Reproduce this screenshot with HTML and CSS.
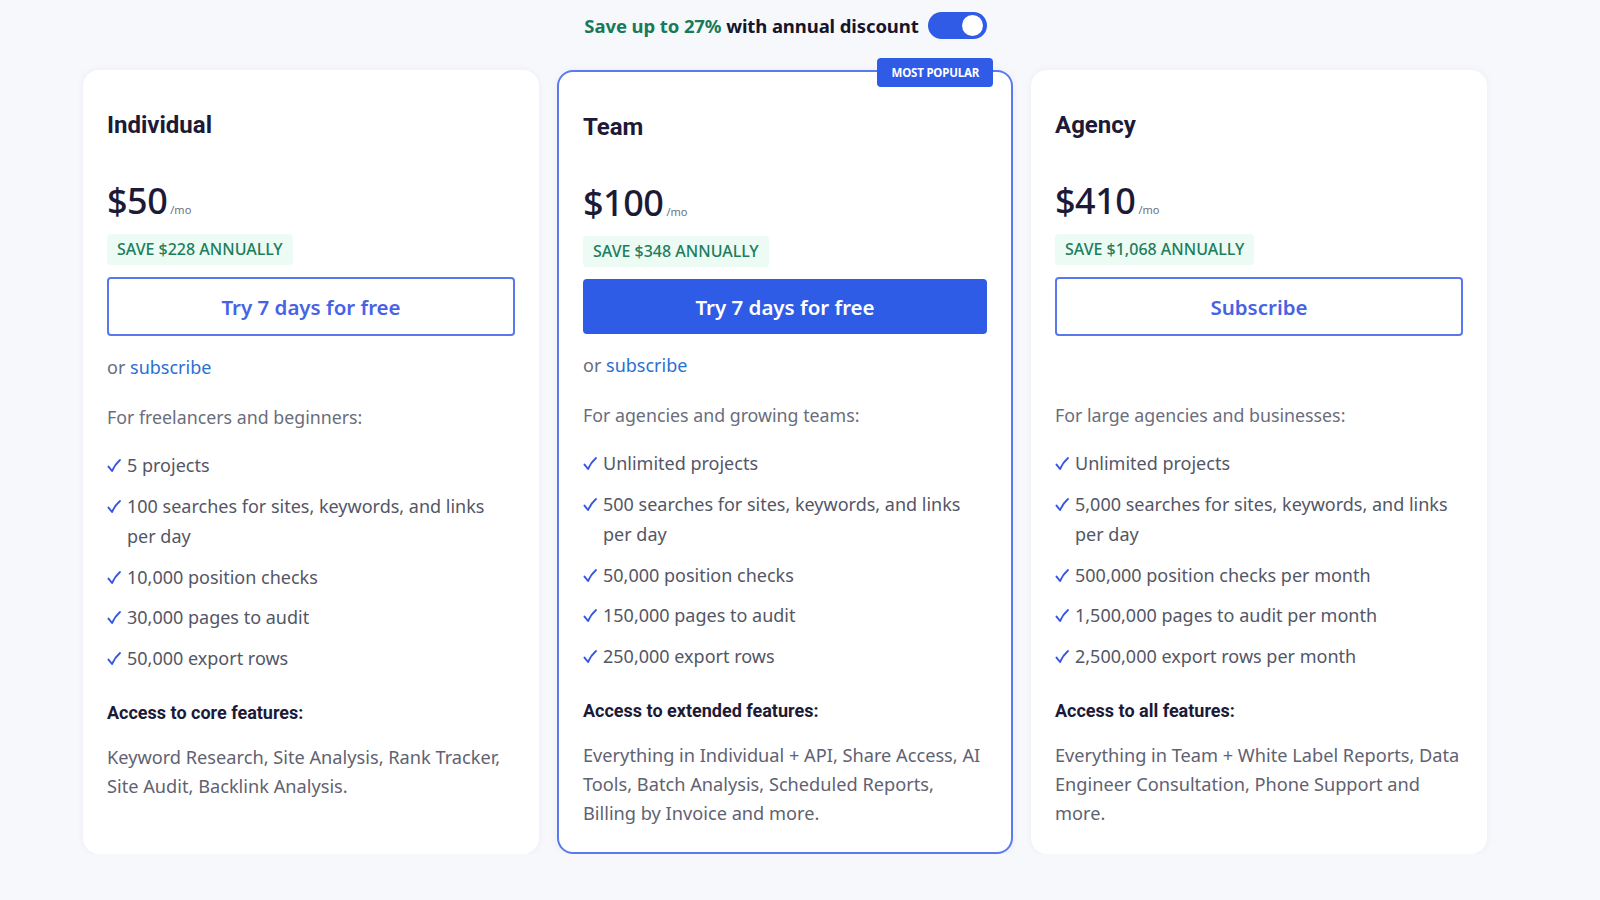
FILE: index.html
```html
<!DOCTYPE html>
<html lang="en">
<head>
<meta charset="utf-8">
<title>Pricing</title>
<link rel="stylesheet" href="styles.css">
</head>
<body>
<div class="page">
  <div class="top">
    <span class="top-text"><span class="green">Save up to 27%</span> with annual discount</span>
    <span class="toggle"><span class="knob"></span></span>
  </div>
  <div class="cards">
    <div class="card">
      <h2 class="plan">Individual</h2>
      <div class="price"><span class="amount">$50</span><span class="per">/mo</span></div>
      <div class="save">SAVE $228 ANNUALLY</div>
      <a class="btn btn-outline">Try 7 days for free</a>
      <div class="alt">or <a class="link">subscribe</a></div>
      <div class="for">For freelancers and beginners:</div>
      <ul class="list">
        <li><svg class="chk" viewBox="0 0 14 14"><path d="M1.5 7.6 L5 12 C7 7.5 9.5 4 13 1"/></svg><span>5 projects</span></li>
        <li><svg class="chk" viewBox="0 0 14 14"><path d="M1.5 7.6 L5 12 C7 7.5 9.5 4 13 1"/></svg><span>100 searches for sites, keywords, and links per day</span></li>
        <li><svg class="chk" viewBox="0 0 14 14"><path d="M1.5 7.6 L5 12 C7 7.5 9.5 4 13 1"/></svg><span>10,000 position checks</span></li>
        <li><svg class="chk" viewBox="0 0 14 14"><path d="M1.5 7.6 L5 12 C7 7.5 9.5 4 13 1"/></svg><span>30,000 pages to audit</span></li>
        <li><svg class="chk" viewBox="0 0 14 14"><path d="M1.5 7.6 L5 12 C7 7.5 9.5 4 13 1"/></svg><span>50,000 export rows</span></li>
      </ul>
      <div class="access">Access to core features:</div>
      <p class="desc">Keyword Research, Site Analysis, Rank Tracker, Site Audit, Backlink Analysis.</p>
    </div>
    <div class="card card-popular">
      <span class="popular">MOST POPULAR</span>
      <h2 class="plan">Team</h2>
      <div class="price"><span class="amount">$100</span><span class="per">/mo</span></div>
      <div class="save">SAVE $348 ANNUALLY</div>
      <a class="btn btn-filled">Try 7 days for free</a>
      <div class="alt">or <a class="link">subscribe</a></div>
      <div class="for">For agencies and growing teams:</div>
      <ul class="list">
        <li><svg class="chk" viewBox="0 0 14 14"><path d="M1.5 7.6 L5 12 C7 7.5 9.5 4 13 1"/></svg><span>Unlimited projects</span></li>
        <li><svg class="chk" viewBox="0 0 14 14"><path d="M1.5 7.6 L5 12 C7 7.5 9.5 4 13 1"/></svg><span>500 searches for sites, keywords, and links per day</span></li>
        <li><svg class="chk" viewBox="0 0 14 14"><path d="M1.5 7.6 L5 12 C7 7.5 9.5 4 13 1"/></svg><span>50,000 position checks</span></li>
        <li><svg class="chk" viewBox="0 0 14 14"><path d="M1.5 7.6 L5 12 C7 7.5 9.5 4 13 1"/></svg><span>150,000 pages to audit</span></li>
        <li><svg class="chk" viewBox="0 0 14 14"><path d="M1.5 7.6 L5 12 C7 7.5 9.5 4 13 1"/></svg><span>250,000 export rows</span></li>
      </ul>
      <div class="access">Access to extended features:</div>
      <p class="desc">Everything in Individual + API, Share Access, AI Tools, Batch Analysis, Scheduled Reports, Billing by Invoice and more.</p>
    </div>
    <div class="card">
      <h2 class="plan">Agency</h2>
      <div class="price"><span class="amount">$410</span><span class="per">/mo</span></div>
      <div class="save">SAVE $1,068 ANNUALLY</div>
      <a class="btn btn-outline">Subscribe</a>
      <div class="alt alt-empty"></div>
      <div class="for">For large agencies and businesses:</div>
      <ul class="list">
        <li><svg class="chk" viewBox="0 0 14 14"><path d="M1.5 7.6 L5 12 C7 7.5 9.5 4 13 1"/></svg><span>Unlimited projects</span></li>
        <li><svg class="chk" viewBox="0 0 14 14"><path d="M1.5 7.6 L5 12 C7 7.5 9.5 4 13 1"/></svg><span>5,000 searches for sites, keywords, and links per day</span></li>
        <li><svg class="chk" viewBox="0 0 14 14"><path d="M1.5 7.6 L5 12 C7 7.5 9.5 4 13 1"/></svg><span>500,000 position checks per month</span></li>
        <li><svg class="chk" viewBox="0 0 14 14"><path d="M1.5 7.6 L5 12 C7 7.5 9.5 4 13 1"/></svg><span>1,500,000 pages to audit per month</span></li>
        <li><svg class="chk" viewBox="0 0 14 14"><path d="M1.5 7.6 L5 12 C7 7.5 9.5 4 13 1"/></svg><span>2,500,000 export rows per month</span></li>
      </ul>
      <div class="access">Access to all features:</div>
      <p class="desc">Everything in Team + White Label Reports, Data Engineer Consultation, Phone Support and more.</p>
    </div>
  </div>
</div>
</body>
</html>
```
FILE: styles.css
```css
* { box-sizing: border-box; }
html, body { margin: 0; padding: 0; }
body {
  background: #f7f8fc;
  font-family: "Noto Sans", "Open Sans", sans-serif;
  color: #5f6271;
}
.page {
  padding: 0 112px 0 83px;
}
.top {
  height: 50px;
  display: flex;
  align-items: center;
  justify-content: center;
  gap: 9px;
  padding-top: 1px;
}
.top-text {
  font-size: 18.5px;
  font-weight: 700;
  color: #15152b;
  letter-spacing: -0.1px;
}
.green { color: #177a58; }
.toggle {
  width: 59px;
  height: 27px;
  border-radius: 14px;
  background: #2f5be6;
  display: flex;
  align-items: center;
  justify-content: flex-end;
  padding-right: 4px;
}
.knob {
  width: 21px;
  height: 21px;
  border-radius: 50%;
  background: #fff;
}
.cards {
  margin-top: 20px;
  display: grid;
  grid-template-columns: repeat(3, 456px);
  gap: 18px;
  align-items: stretch;
}
.card {
  position: relative;
  background: #fff;
  border-radius: 16px;
  padding: 40px 24px 24px;
  box-shadow: 0 0 8px rgba(30, 40, 90, 0.05);
  display: flex;
  flex-direction: column;
}
.card-popular {
  border: 2px solid #5a7af0;
}
.popular {
  position: absolute;
  top: -14px;
  right: 18px;
  height: 29px;
  padding: 0 14px;
  background: #2f5be6;
  color: #fff;
  border-radius: 4px;
  font-family: "Noto Sans", sans-serif;
  font-size: 11.5px;
  font-weight: 700;
  line-height: 29px;
  letter-spacing: -0.2px;
}
.plan {
  margin: 0;
  font-family: Roboto, "Noto Sans", sans-serif;
  font-size: 24px;
  font-weight: 700;
  line-height: 30px;
  color: #1c1a36;
}
.price {
  margin-top: 39px;
  height: 44px;
  display: flex;
  align-items: baseline;
  color: #1c1a36;
}
.amount {
  font-size: 36px;
  font-weight: 500;
  line-height: 44px;
  letter-spacing: -0.5px;
}
.per {
  font-size: 11px;
  color: #6d7080;
  margin-left: 3px;
}
.save {
  align-self: flex-start;
  margin-top: 11px;
  height: 31px;
  padding: 0 10px;
  background: #ecfbf4;
  color: #1d7d5c;
  border-radius: 4px;
  font-size: 16px;
  font-weight: 500;
  line-height: 31px;
}
.btn {
  margin-top: 12px;
  display: flex;
  align-items: center;
  justify-content: center;
  border-radius: 4px;
  font-size: 20.5px;
  font-weight: 600;
  cursor: pointer;
}
.btn-outline {
  height: 59px;
  border: 2px solid #5977ef;
  color: #4862e6;
  background: #fff;
}
.btn-filled {
  height: 55px;
  background: #2f5ce6;
  color: #fff;
}
.alt {
  margin-top: 17px;
  height: 28px;
  font-size: 18px;
  line-height: 28px;
  color: #6a6d7c;
}
.alt-empty { height: 26px; }
.link { color: #2a6fd4; }
.for {
  margin-top: 22px;
  font-size: 17.8px;
  line-height: 28px;
  color: #6a6d7c;
}
.list {
  list-style: none;
  margin: 19px 0 0;
  padding: 0;
  display: flex;
  flex-direction: column;
  gap: 10px;
}
.list li {
  display: flex;
  align-items: flex-start;
  font-size: 18px;
  line-height: 30.5px;
  color: #535666;
}
.chk {
  flex: 0 0 14px;
  width: 14px;
  height: 14px;
  margin: 9px 6px 0 0;
  fill: none;
  stroke: #3557e0;
  stroke-width: 1.9;
  stroke-linecap: round;
  stroke-linejoin: round;
}
.access {
  margin-top: 27px;
  font-family: Roboto, "Noto Sans", sans-serif;
  font-size: 18px;
  font-weight: 700;
  line-height: 26px;
  color: #1c1a36;
}
.desc {
  margin: 17px 0 0;
  font-size: 18.2px;
  line-height: 29px;
  color: #5f6271;
}
```
